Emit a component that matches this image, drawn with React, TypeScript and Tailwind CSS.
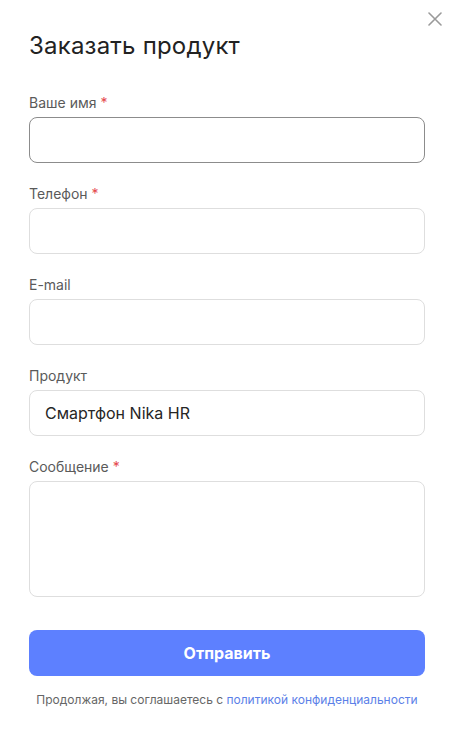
import React from "react";

function Label({ text, required }: { text: string; required?: boolean }) {
  return (
    <div className="text-[14px] leading-[20px] text-[#5a5a5a] mb-[4px]">
      {text}
      {required && <span className="text-[#e5484d]"> *</span>}
    </div>
  );
}

export default function App() {
  return (
    <div
      className="relative w-[454px] h-[746px] bg-white px-[29px] pt-[30px]"
      style={{ fontFamily: "Inter, 'Noto Sans', sans-serif" }}
    >
      <button className="absolute top-[12px] left-[428px] w-[14px] h-[14px] text-[#9a9a9a]" aria-label="Закрыть">
        <svg width="14" height="14" viewBox="0 0 14 14" fill="none" stroke="currentColor" strokeWidth="1.6" strokeLinecap="round">
          <path d="M1 1L13 13M13 1L1 13" />
        </svg>
      </button>

      <h1 className="text-[24px] leading-[32px] tracking-[0.2px] text-[#222] font-normal">Заказать продукт</h1>

      <div className="mt-[31px] flex flex-col gap-[21px]">
        <div>
          <Label text="Ваше имя" required />
          <div className="h-[46px] rounded-[8px] border border-[#8c8c8c]" />
        </div>
        <div>
          <Label text="Телефон" required />
          <div className="h-[46px] rounded-[8px] border border-[#dedede]" />
        </div>
        <div>
          <Label text="E-mail" />
          <div className="h-[46px] rounded-[8px] border border-[#dedede]" />
        </div>
        <div>
          <Label text="Продукт" />
          <div className="h-[46px] rounded-[8px] border border-[#dedede] flex items-center px-[15px] text-[16px] text-[#262626]">
            Смартфон Nika HR
          </div>
        </div>
        <div>
          <Label text="Сообщение" required />
          <div className="h-[116px] rounded-[8px] border border-[#dedede]" />
        </div>
      </div>

      <button className="mt-[33px] w-full h-[46px] rounded-[8px] bg-[#5d80ff] text-white text-[16px] font-bold flex items-center justify-center">
        Отправить
      </button>

      <p className="mt-[16px] text-center text-[12px] leading-[16px] text-[#666]">
        Продолжая, вы соглашаетесь с <span className="text-[#5b7fe8]">политикой конфиденциальности</span>
      </p>
    </div>
  );
}
